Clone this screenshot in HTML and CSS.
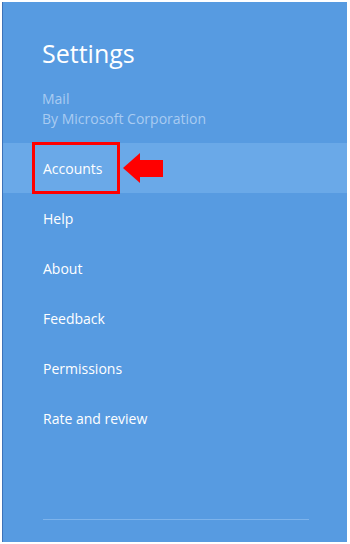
FILE: index.html
```html
<html lang="en"><head>
    <meta charset="UTF-8">
    <meta name="viewport" content="width=device-width, initial-scale=1.0">
    <title>Settings</title>
    <link rel="stylesheet" href="styles.css">
</head>
<body>
    <div class="pane">
        <!-- Header -->
        <div class="header">
            <h1>Settings</h1>
            <p class="app">Mail</p>
            <p class="app">By Microsoft Corporation</p>
        </div>

        <!-- Menu -->
        <ul class="menu">
            <li class="selected">
                <span class="mark">Accounts</span>
                <span class="arrow"></span>
            </li>
            <li>Help</li>
            <li>About</li>
            <li>Feedback</li>
            <li>Permissions</li>
            <li>Rate and review</li>
        </ul>

        <div class="footer-line"></div>
    </div>
</body></html>
```

FILE: styles.css
```css
body {
    margin: 0;
    background: #fff;
    font-family: "Open Sans", "Noto Sans", sans-serif;
}
.pane {
    margin: 2px 0 0 2px;
    width: 344px;
    height: 540px;
    background: #579be1;
    border-left: 1px solid #3d72b8;
    color: #fff;
    display: flex;
    flex-direction: column;
}
.header {
    padding: 34px 0 0 39px;
    height: 105px;
}
.header h1 {
    margin: 0 0 19px;
    font-size: 25px;
    font-weight: 400;
    line-height: 34px;
}
.app {
    margin: 0;
    font-size: 14px;
    line-height: 20px;
    color: #a9cbf1;
}
.menu {
    list-style: none;
    margin: 2px 0 0;
    padding: 0;
}
.menu li {
    height: 50px;
    display: flex;
    align-items: center;
    padding-left: 40px;
    font-size: 14px;
}
.menu li.selected {
    background: #6aa9e8;
    padding-left: 29px;
}
.mark {
    border: 3px solid #f00;
    height: 52px;
    width: 88px;
    box-sizing: border-box;
    display: flex;
    align-items: center;
    padding-left: 8px;
}
.arrow {
    margin-left: 3px;
    display: flex;
    align-items: center;
}
.arrow::before {
    content: "";
    border-right: 17px solid #f00;
    border-top: 15px solid transparent;
    border-bottom: 15px solid transparent;
}
.arrow::after {
    content: "";
    width: 23px;
    height: 17px;
    background: #f00;
}
.footer-line {
    margin: auto 38px 22px 40px;
    height: 1px;
    background: #7db3eb;
}
```
